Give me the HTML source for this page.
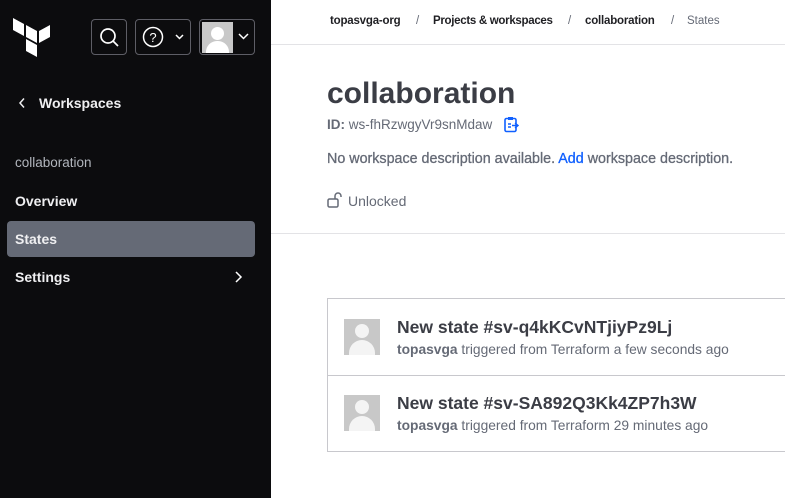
<!DOCTYPE html>
<html><head><style>
*{margin:0;padding:0;box-sizing:border-box}
body{width:785px;height:498px;overflow:hidden;font-family:"Liberation Sans",sans-serif;background:#fff;position:relative}
.sb{position:absolute;left:0;top:0;width:271px;height:498px;background:#0c0c0e;color:#fff}
.btn{position:absolute;top:19px;height:36px;border:1px solid #5e5e66;border-radius:4px}
.abs{position:absolute;white-space:nowrap}
.nav{position:absolute;left:15px;font-size:14px;font-weight:bold;color:#efeff1}
.bc{position:absolute;top:15px;font-size:11.5px;color:#1f1f23;font-weight:bold;white-space:nowrap}
.sep{color:#656a76;font-weight:normal}
.row{position:absolute;left:327px;width:470px;height:78px;border:1px solid #c8c8cd}
.av{position:absolute;left:16px;top:20px;width:36px;height:36px;background:#c8c8c8;overflow:hidden}
.t{position:absolute;left:69px;top:18px;font-size:17.5px;font-weight:bold;color:#3b3d45}
.s{position:absolute;left:69px;top:43px;font-size:13.8px;color:#656a76}
</style></head><body>
<div class="sb">
 <svg class="abs" style="left:13px;top:18px" width="38" height="40" viewBox="0 0 38 40"><path d="M0 0l11 6v12L0 12z M13 7l11 6v12l-11-6z M26 13l11-6v12l-11 6z M13 21l11 6v12l-11-6z" fill="#fff"/></svg>
 <div class="btn" style="left:91px;width:36px"><svg width="34" height="34" viewBox="0 0 34 34"><circle cx="16" cy="16" r="7" fill="none" stroke="#fff" stroke-width="1.7"/><path d="M21 21l5 5" stroke="#fff" stroke-width="1.7"/></svg></div>
 <div class="btn" style="left:135px;width:56px"><svg width="54" height="34" viewBox="0 0 54 34"><circle cx="17" cy="17" r="9.5" fill="none" stroke="#fff" stroke-width="1.5"/><text x="17" y="22" font-size="13" fill="#fff" text-anchor="middle" font-family="Liberation Sans">?</text><path d="M40 15l3.5 3.5 3.5-3.5" stroke="#fff" stroke-width="1.5" fill="none"/></svg></div>
 <div class="btn" style="left:199px;width:56px"><div style="position:absolute;left:2px;top:2px;width:31px;height:31px;background:#c8c8c8;overflow:hidden"><div style="position:absolute;left:9px;top:5px;width:13px;height:13px;border-radius:50%;background:#fff"></div><div style="position:absolute;left:4px;top:19px;width:23px;height:20px;border-radius:11px 11px 0 0;background:#fff"></div></div><svg style="position:absolute;left:36px;top:12px" width="16" height="10"><path d="M3 2l4.5 4.5 4.5-4.5" stroke="#fff" stroke-width="1.5" fill="none"/></svg></div>
 <svg class="abs" style="left:18px;top:97px" width="10" height="12"><path d="M6 1.5L2 6l4 4.5" stroke="#efeff1" stroke-width="1.5" fill="none"/></svg>
 <div class="nav" style="left:39px;top:95px">Workspaces</div>
 <div class="nav" style="top:155px;font-weight:normal;color:#b2b6bd;font-size:13.5px">collaboration</div>
 <div class="nav" style="top:193px">Overview</div>
 <div style="position:absolute;left:7px;top:221px;width:248px;height:36px;background:#656a76;border-radius:4px"></div>
 <div class="nav" style="top:231px">States</div>
 <div class="nav" style="top:269px">Settings</div>
 <svg class="abs" style="left:233px;top:270px" width="10" height="14"><path d="M3 2l5 5-5 5" stroke="#fff" stroke-width="1.5" fill="none"/></svg>
</div>
<div class="bc" style="left:330px;letter-spacing:-0.2px">topasvga-org</div>
<div class="bc sep" style="left:416px">/</div>
<div class="bc" style="left:433px;letter-spacing:-0.3px">Projects &amp; workspaces</div>
<div class="bc sep" style="left:568px">/</div>
<div class="bc" style="left:585px;letter-spacing:-0.2px">collaboration</div>
<div class="bc sep" style="left:671px">/</div>
<div class="bc sep" style="left:687px">States</div>
<div style="position:absolute;left:271px;top:44px;width:514px;height:1px;background:#e3e3e6"></div>
<div class="abs" style="left:327px;top:77px;font-size:30px;font-weight:bold;color:#3b3d45">collaboration</div>
<div class="abs" style="left:327px;top:117px;font-size:13.5px;color:#656a76"><b>ID:</b> ws-fhRzwgyVr9snMdaw</div>
<svg class="abs" style="left:503px;top:116px" width="16" height="17" viewBox="0 0 16 17"><rect x="2" y="2.5" width="11" height="13" rx="1.5" fill="none" stroke="#1060ff" stroke-width="1.6"/><rect x="5" y="1" width="5" height="3" fill="#1060ff"/><path d="M5 8h3M5 11h3M9 9.5h6M12 7l3 2.5-3 2.5" stroke="#1060ff" stroke-width="1.4" fill="none"/></svg>
<div class="abs" style="left:327px;top:151px;font-size:14.3px;color:#656a76;-webkit-text-stroke:0.3px #656a76">No workspace description available. <span style="color:#1060ff;-webkit-text-stroke:0.3px #1060ff">Add</span> workspace description.</div>
<svg class="abs" style="left:327px;top:192px" width="16" height="16" viewBox="0 0 16 16"><rect x="1" y="7" width="10" height="8" rx="1.5" fill="none" stroke="#656a76" stroke-width="1.5"/><path d="M8 7V4a3 3 0 016 0v1" fill="none" stroke="#656a76" stroke-width="1.5"/></svg>
<div class="abs" style="left:348px;top:193px;font-size:14px;color:#656a76">Unlocked</div>
<div style="position:absolute;left:271px;top:233px;width:514px;height:1px;background:#e3e3e6"></div>
<div class="row" style="top:298px"><div class="av"><div style="position:absolute;left:11px;top:5px;width:14px;height:14px;border-radius:50%;background:#f4f4f4"></div><div style="position:absolute;left:5px;top:21px;width:26px;height:22px;border-radius:13px 13px 0 0;background:#f4f4f4"></div></div><div class="t">New state #sv-q4kKCvNTjiyPz9Lj</div><div class="s"><b style="font-weight:600">topasvga</b> triggered from Terraform a few seconds ago</div></div>
<div class="row" style="top:375px;border-top:none;height:77px"><div class="av" style="top:20px"><div style="position:absolute;left:11px;top:5px;width:14px;height:14px;border-radius:50%;background:#f4f4f4"></div><div style="position:absolute;left:5px;top:21px;width:26px;height:22px;border-radius:13px 13px 0 0;background:#f4f4f4"></div></div><div class="t">New state #sv-SA892Q3Kk4ZP7h3W</div><div class="s"><b style="font-weight:600">topasvga</b> triggered from Terraform 29 minutes ago</div></div>
</body></html>
